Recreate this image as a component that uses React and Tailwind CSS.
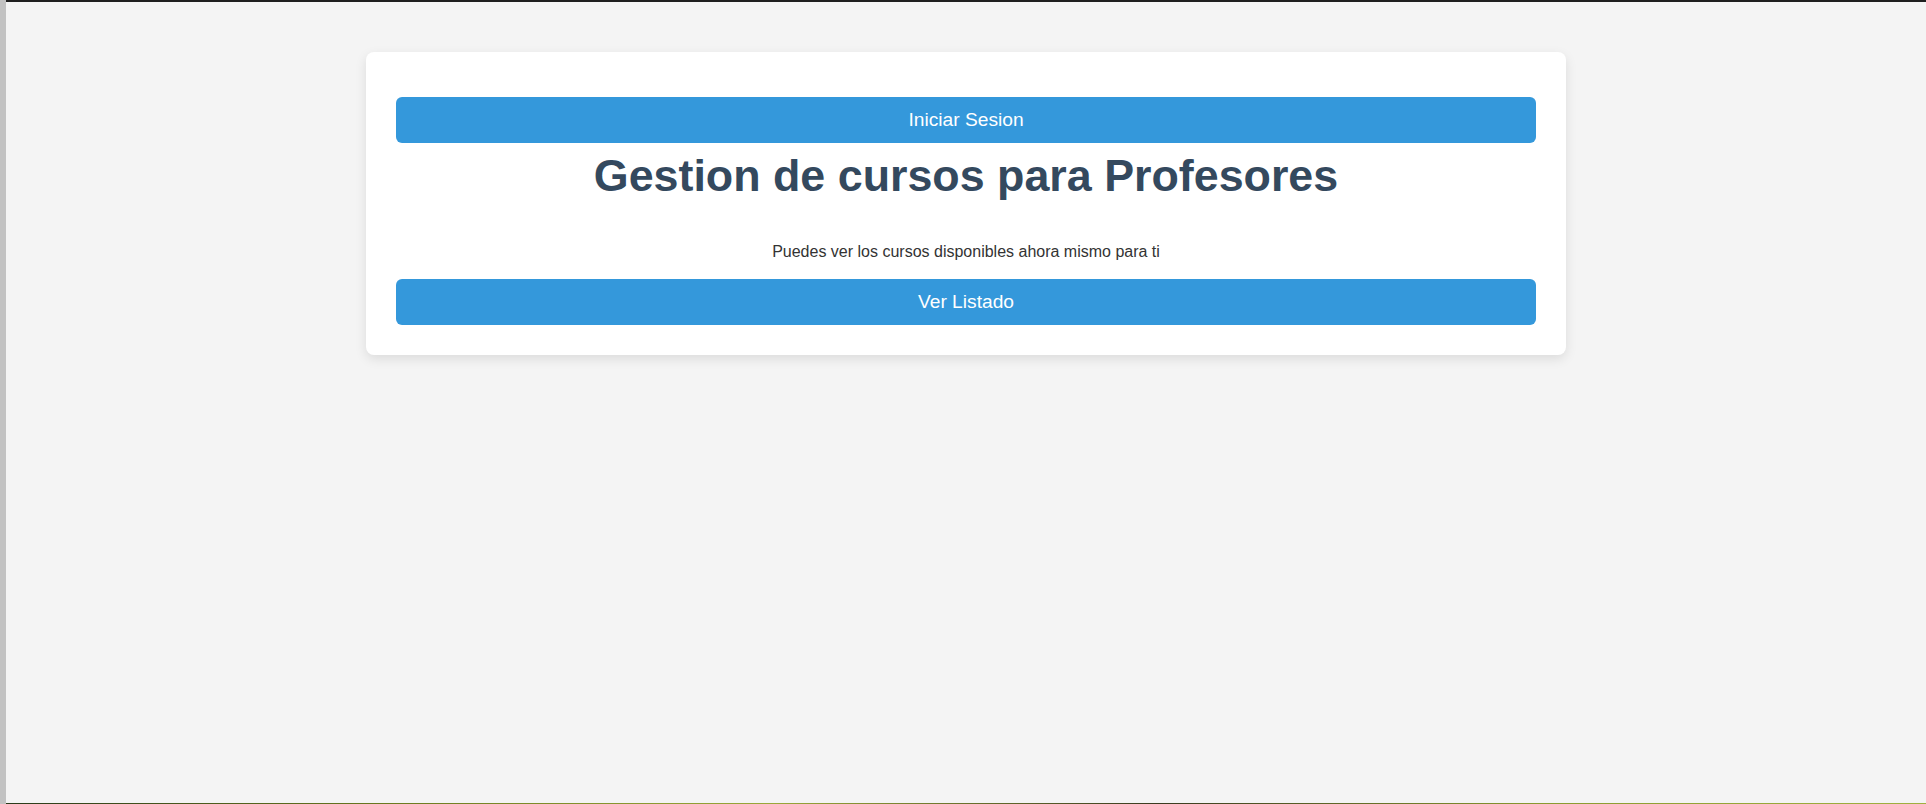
import React from "react";

const App = () => {
  return (
    <div
      className="flex h-[804px] w-full overflow-hidden bg-[#f4f4f4]"
      style={{ fontFamily: '"Liberation Sans", Arial, sans-serif' }}
    >
      {/* left frame strip */}
      <div className="w-[6px] shrink-0 bg-[#c2c2c2]" />

      <div className="flex flex-1 flex-col">
        {/* top frame line */}
        <div className="h-[2px] bg-[#1f1f1f]" />

        {/* main section */}
        <div className="flex flex-1 justify-center pt-[50px]">
          <div className="h-fit w-[1200px] rounded-lg bg-white px-[30px] pt-[45px] pb-[30px] shadow-[0_4px_12px_rgba(0,0,0,0.1)]">
            <button className="h-[46px] w-full rounded-md bg-[#3498db] text-[19.2px] text-white">
              Iniciar Sesion
            </button>

            <h1 className="mt-[6px] text-center text-[44.8px] font-bold leading-[52px] text-[#34495e]">
              Gestion de cursos para Profesores
            </h1>

            <p className="mt-[42px] text-center text-[16px] leading-[18px] text-[#333]">
              Puedes ver los cursos disponibles ahora mismo para ti
            </p>

            <button className="mt-[18px] h-[46px] w-full rounded-md bg-[#3498db] text-[19.2px] text-white">
              Ver Listado
            </button>
          </div>
        </div>

        {/* bottom edge strip */}
        <div className="h-[1px] bg-[linear-gradient(90deg,#2a3a1a,#6b7a20,#9aa83a,#3a3a20,#8a9a30,#a0b040)]" />
      </div>
    </div>
  );
};

export default App;
